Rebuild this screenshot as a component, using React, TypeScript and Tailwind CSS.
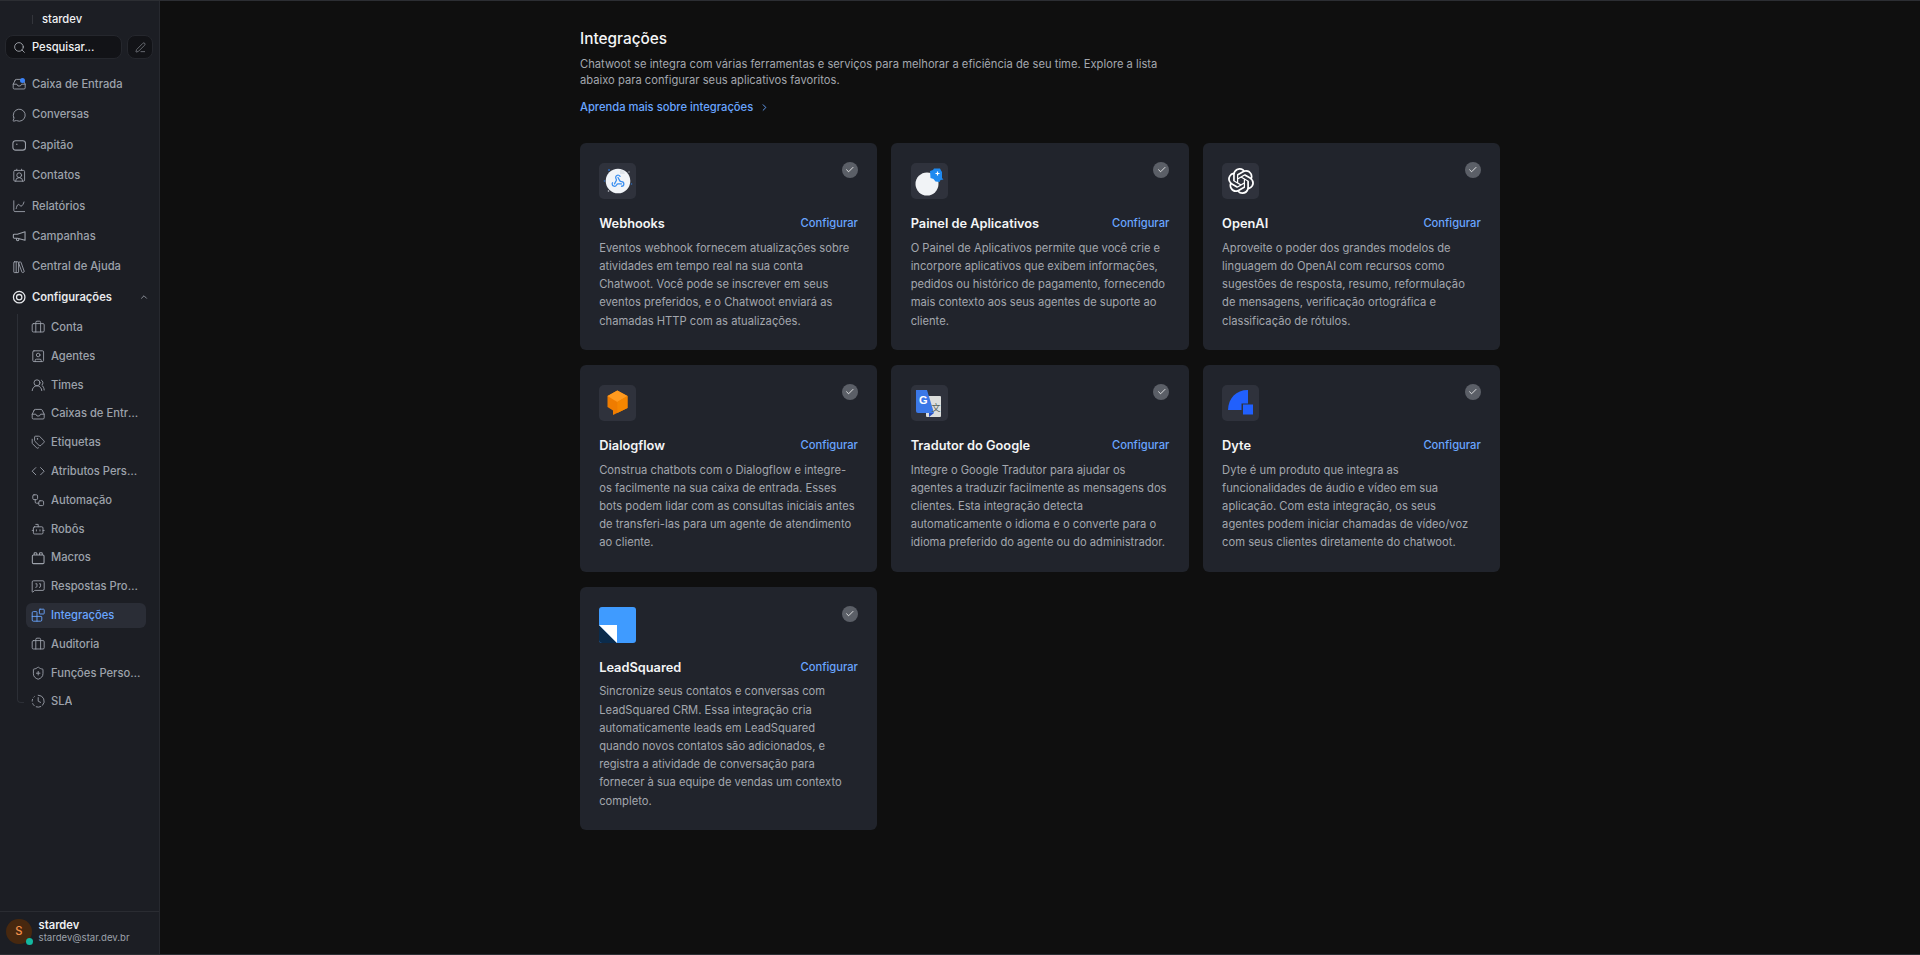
import {
  Blocks,
  Bot,
  Briefcase,
  ChartSpline,
  Check,
  ChevronRight,
  ChevronUp,
  ClockFading,
  Code,
  ContactRound,
  Inbox,
  LibraryBig,
  MessageCircle,
  MessageSquareQuote,
  PenLine,
  Search,
  ShieldPlus,
  SquareUser,
  Tags,
  UsersRound,
  Webhook,
  Workflow,
} from "lucide-react";
import type { ReactNode } from "react";
import { SiOpenai } from "react-icons/si";

type IconProps = { className?: string; strokeWidth?: number };

const CaptainIcon = ({ className }: IconProps) => (
  <svg viewBox="0 0 16 16" fill="none" stroke="currentColor" strokeWidth="1.2" className={className}>
    <rect x="1" y="3" width="14" height="10.5" rx="3" />
    <path d="M4.500 7h1.600" />
  </svg>
);

const MacroIcon = ({ className }: IconProps) => (
  <svg viewBox="0 0 16 16" fill="none" stroke="currentColor" strokeWidth="1.2" className={className}>
    <rect x="1.500" y="4.500" width="13" height="9.500" rx="1.200" />
    <path d="M3.500 4.500V2.800a.8.8 0 0 1 .8-.8h1.400a.8.8 0 0 1 .8.8v1.700M9.500 4.500V2.800a.8.8 0 0 1 .8-.8h1.400a.8.8 0 0 1 .8.8v1.700" />
  </svg>
);

const CampaignIcon = ({ className }: IconProps) => (
  <svg viewBox="0 0 16 16" fill="none" stroke="currentColor" strokeWidth="1.2" strokeLinejoin="round" className={className}>
    <path d="M14.500 3v9.500L6 10.200H2.500a1 1 0 0 1-1-1V6.800a1 1 0 0 1 1-1H6z" />
    <path d="M5 10.200v1.600a1.300 1.300 0 0 0 2.600 0v-1.100" />
  </svg>
);

const SettingsRingIcon = ({ className }: IconProps) => (
  <svg viewBox="0 0 16 16" fill="none" stroke="currentColor" strokeWidth="1.4" className={className}>
    <circle cx="8" cy="8" r="6.400" />
    <circle cx="8" cy="8" r="3" />
  </svg>
);

const mainItems = [
  { label: "Conversas", icon: MessageCircle },
  { label: "Capitão", icon: CaptainIcon },
  { label: "Contatos", icon: ContactRound },
  { label: "Relatórios", icon: ChartSpline },
  { label: "Campanhas", icon: CampaignIcon },
  { label: "Central de Ajuda", icon: LibraryBig },
];

const settingsItems = [
  { label: "Conta", icon: Briefcase },
  { label: "Agentes", icon: SquareUser },
  { label: "Times", icon: UsersRound },
  { label: "Caixas de Entrada", icon: Inbox },
  { label: "Etiquetas", icon: Tags },
  { label: "Atributos Personalizados", icon: Code },
  { label: "Automação", icon: Workflow },
  { label: "Robôs", icon: Bot },
  { label: "Macros", icon: MacroIcon },
  { label: "Respostas Prontas", icon: MessageSquareQuote },
  { label: "Integrações", icon: Blocks, active: true },
  { label: "Auditoria", icon: Briefcase },
  { label: "Funções Personalizadas", icon: ShieldPlus },
  { label: "SLA", icon: ClockFading },
];

const cards: { title: string; text: string; logo: ReactNode }[] = [
  {
    title: "Webhooks",
    text: "Eventos webhook fornecem atualizações sobre atividades em tempo real na sua conta Chatwoot. Você pode se inscrever em seus eventos preferidos, e o Chatwoot enviará as chamadas HTTP com as atualizações.",
    logo: (
      <svg viewBox="0 0 36 36" className="h-[36px] w-[36px] text-[#3b8ff0]">
        <circle cx="18" cy="18" r="12.300" fill="#f1f4f8" />
        <path d="M20 6.500l4 1.500 1 3h-5z" fill="#dfe4ea" />
        <circle cx="9" cy="7" r="1" fill="#2f6fc0" />
        <circle cx="4.500" cy="18" r=".8" fill="#2f6fc0" />
        <circle cx="31.500" cy="21" r=".8" fill="#2f6fc0" />
        <circle cx="29" cy="9" r=".8" fill="#8d929b" />
        <circle cx="8.500" cy="28" r=".8" fill="#cfd3d9" />
        <Webhook x="11" y="11" width="14" height="14" strokeWidth={2.200} />
      </svg>
    ),
  },
  {
    title: "Painel de Aplicativos",
    text: "O Painel de Aplicativos permite que você crie e incorpore aplicativos que exibem informações, pedidos ou histórico de pagamento, fornecendo mais contexto aos seus agentes de suporte ao cliente.",
    logo: (
      <svg viewBox="0 0 36 36" className="h-[36px] w-[36px]">
        <circle cx="16" cy="21" r="11.500" fill="#f1f3f6" />
        <path d="M19 8l3-1 1-1.500h6l1 2 1 1.500v6l1.500 1.500-3 .5-1 2-4-.5-2-2.500-3-1z" fill="#1f8af0" />
        <path d="M26.500 8.500v4M24.500 10.500h4" stroke="#fff" strokeWidth="1.200" />
      </svg>
    ),
  },
  {
    title: "OpenAI",
    text: "Aproveite o poder dos grandes modelos de linguagem do OpenAI com recursos como sugestões de resposta, resumo, reformulação de mensagens, verificação ortográfica e classificação de rótulos.",
    logo: <SiOpenai className="h-[26px] w-[26px] text-white" />,
  },
  {
    title: "Dialogflow",
    text: "Construa chatbots com o Dialogflow e integre-os facilmente na sua caixa de entrada. Esses bots podem lidar com as consultas iniciais antes de transferi-las para um agente de atendimento ao cliente.",
    logo: (
      <svg viewBox="0 0 37 36" className="h-[36px] w-[37px]">
        <path d="M18.300 5.500L28.500 11v12L14 30v-4.500L8.500 22V11z" fill="#ef7c00" />
        <path d="M18.300 5.500L28.500 11l-10.200 6-9.800-6z" fill="#ff9a1f" />
        <path d="M18.300 17l10.200-6v12l-10.200 5z" fill="#f58600" />
      </svg>
    ),
  },
  {
    title: "Tradutor do Google",
    text: "Integre o Google Tradutor para ajudar os agentes a traduzir facilmente as mensagens dos clientes. Esta integração detecta automaticamente o idioma e o converte para o idioma preferido do agente ou do administrador.",
    logo: (
      <svg viewBox="0 0 36 36" className="h-[36px] w-[36px]">
        <rect x="15" y="11" width="15" height="21" rx="1" fill="#dcdedc" />
        <path d="M5 5h11l7 23H7a2 2 0 0 1-2-2z" fill="#3b78e7" />
        <path d="M18 28h5l-5 4z" fill="#2a4fc0" />
        <text x="8" y="19" fontSize="11" fontWeight="600" fill="#fff" fontFamily="'Liberation Sans', sans-serif">G</text>
        <text x="20.500" y="26" fontSize="9" fill="#56625c" fontFamily="'Noto Sans CJK SC', sans-serif">文</text>
      </svg>
    ),
  },
  {
    title: "Dyte",
    text: "Dyte é um produto que integra as funcionalidades de áudio e vídeo em sua aplicação. Com esta integração, os seus agentes podem iniciar chamadas de vídeo/voz com seus clientes diretamente do chatwoot.",
    logo: (
      <svg viewBox="0 0 37 36" className="h-[36px] w-[37px]">
        <path d="M26 5v13.500h-6.500V25H6C6.500 13 14 5 26 5z" fill="#2160fd" />
        <rect x="21" y="19.500" width="10" height="10" fill="#2160fd" />
      </svg>
    ),
  },
  {
    title: "LeadSquared",
    text: "Sincronize seus contatos e conversas com LeadSquared CRM. Essa integração cria automaticamente leads em LeadSquared quando novos contatos são adicionados, e registra a atividade de conversação para fornecer à sua equipe de vendas um contexto completo.",
    logo: (
      <svg viewBox="0 0 37 36" className="h-[36px] w-[37px]">
        <path d="M3 0h31a3 3 0 0 1 3 3v30a3 3 0 0 1-3 3H3a3 3 0 0 1-3-3V3a3 3 0 0 1 3-3z" fill="#3f9bff" />
        <path d="M0 18l18 18H3a3 3 0 0 1-3-3z" fill="#0b2b4b" />
        <path d="M0 18h18v18z" fill="#fff" />
      </svg>
    ),
  },
];

const App = () => {
  return (
    <div className="flex h-screen overflow-hidden border-y border-[#2c2e33] bg-[#0f0f0f] font-['Inter',sans-serif] text-[11.2px]">
      <aside className="flex w-[160px] shrink-0 flex-col border-r border-[#27292f] bg-[#1c1e24]">
        <div className="mt-[11px] flex h-[15px] items-center pl-[32px]">
          <span className="h-[9px] border-l border-[#33353b]" />
          <span className="ml-[9px] font-medium text-[#f0f1f3]">stardev</span>
        </div>

        <div className="mt-[8px] flex gap-[5px] pl-[5px]">
          <div className="flex h-[24px] w-[117px] shrink-0 items-center gap-[6px] rounded-[8px] border border-[#25272d] bg-[#121317] pl-[7px]">
            <Search className="h-[13px] w-[13px] text-[#b4b8bf]" strokeWidth={1.5} />
            <span className="font-medium text-[#f0f1f3]">Pesquisar...</span>
          </div>
          <div className="flex h-[24px] w-[26px] shrink-0 items-center justify-center rounded-[8px] border border-[#25272d] bg-[#121317]">
            <PenLine className="h-[11px] w-[11px] text-[#8b8f96]" strokeWidth={1.5} />
          </div>
        </div>

        <nav className="mt-[13.500px] flex flex-col gap-[6.400px] px-[6.400px]">
          <div className="flex h-[24px] items-center gap-[5.600px] pl-[5.600px] font-medium text-[#9da2ab]">
            <div className="relative">
              <Inbox className="h-[14.400px] w-[14.400px]" strokeWidth={1.5} />
              <span className="absolute right-[1.500px] top-[0.500px] h-[5px] w-[5px] rounded-full bg-[#3b82f6]" />
            </div>
            Caixa de Entrada
          </div>
          {mainItems.map((item) => (
            <div key={item.label} className="flex h-[24px] items-center gap-[5.600px] pl-[5.600px] font-medium text-[#9da2ab]">
              <item.icon className="h-[14.400px] w-[14.400px]" strokeWidth={1.5} />
              {item.label}
            </div>
          ))}
          <div className="flex h-[24px] items-center gap-[5.600px] pl-[5.600px] font-semibold text-[#e6e8eb]">
            <SettingsRingIcon className="h-[14.400px] w-[14.400px]" />
            Configurações
            <ChevronUp className="ml-auto mr-[4px] h-[10px] w-[10px] text-[#9da2ab]" strokeWidth={2} />
          </div>
        </nav>

        <div className="relative ml-[26px] mr-[13px] mt-[5.500px] flex flex-col gap-[3.200px]">
          <span className="absolute -left-[9px] -top-[1px] h-[389px] w-[7px] rounded-bl-[4px] border-b border-l border-[#2c2f36]" />
          {settingsItems.map((item) => (
            <div
              key={item.label}
              className={
                item.active
                  ? "flex h-[25.600px] items-center gap-[5.400px] rounded-[6px] bg-[#2a2d36] pl-[5.200px] pr-[5px] font-medium text-[#69a5ff]"
                  : "flex h-[25.600px] items-center gap-[5.400px] pl-[5.200px] pr-[5px] font-medium text-[#9da2ab]"
              }
            >
              <item.icon className="h-[14.400px] w-[14.400px] shrink-0" strokeWidth={1.5} />
              <span className="truncate">{item.label}</span>
            </div>
          ))}
        </div>

        <div className="mt-auto flex h-[43px] items-center gap-[7px] border-t border-[#2a2c32] pb-[3px] pl-[6px]">
          <div className="relative flex h-[25.600px] w-[25.600px] items-center justify-center rounded-full bg-[#47280f] text-[11.2px] font-medium text-[#f5914a]">
            S
            <span className="absolute -bottom-[1px] -right-[1px] h-[7px] w-[7px] rounded-full bg-[#14b8a0]" />
          </div>
          <div className="flex flex-col">
            <span className="text-[11.2px] leading-[13px] font-semibold text-[#eef0f2]">stardev</span>
            <span className="text-[9.600px] leading-[12px] text-[#9da2ab]">stardev@star.dev.br</span>
          </div>
        </div>
      </aside>

      <main className="min-w-0 flex-1">
        <div className="mx-auto w-[920px] pt-[27px]">
          <h1 className="text-[15.360px] leading-[22px] font-medium text-[#f4f5f6]">Integrações</h1>
          <p className="mt-[6px] w-[600px] text-[11.200px] leading-[16px] text-[#a3a7ae]">
            Chatwoot se integra com várias ferramentas e serviços para melhorar a eficiência de seu time. Explore a lista abaixo para configurar seus aplicativos favoritos.
          </p>
          <div className="mt-[11px] flex items-center gap-[6px] font-medium leading-[16px] text-[#69a5ff]">
            Aprenda mais sobre integrações
            <ChevronRight className="h-[11px] w-[11px]" strokeWidth={2} />
          </div>

          <div className="mt-[28px] grid grid-cols-3 items-start gap-[14.400px]">
            {cards.map((card) => (
              <div key={card.title} className="rounded-[6px] bg-[#21242c] px-[19.200px] pb-[20.700px] pt-[20px]">
                <div className="flex items-start justify-between">
                  <div className="flex h-[36px] w-[37px] items-center justify-center rounded-[5px] bg-[#2f323c]">
                    {card.logo}
                  </div>
                  <div className="-mt-[1px] flex h-[16px] w-[16px] items-center justify-center rounded-full bg-[#5b5f67]">
                    <Check className="h-[9.600px] w-[9.600px] text-white" strokeWidth={2} />
                  </div>
                </div>
                <div className="mt-[15px] flex items-center justify-between">
                  <span className="text-[12.800px] leading-[19.200px] font-semibold text-[#f4f5f6]">{card.title}</span>
                  <span className="font-medium text-[#69a5ff]">Configurar</span>
                </div>
                <p className="mt-[5.500px] text-[11.200px] leading-[18.200px] text-[#a3a7ae]">{card.text}</p>
              </div>
            ))}
          </div>
        </div>
      </main>
    </div>
  );
};

export default App;
